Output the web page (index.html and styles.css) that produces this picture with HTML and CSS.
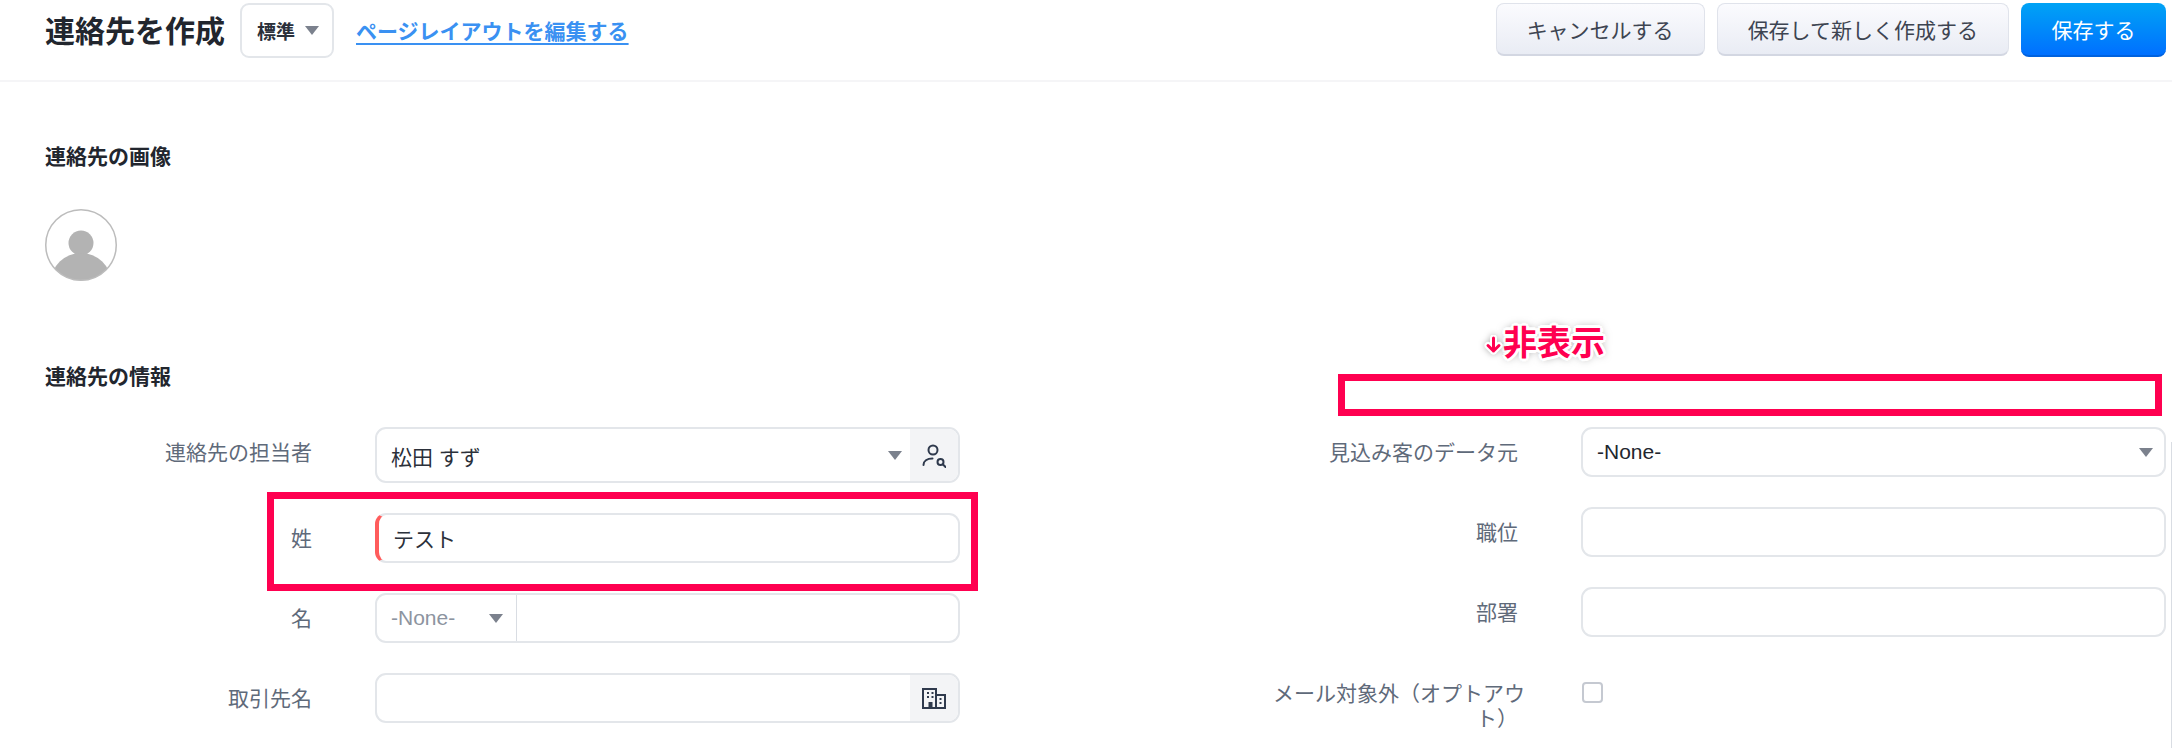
FILE: index.html
```html
<!DOCTYPE html>
<html lang="ja">
  <head>
    <meta charset="UTF-8" />
    <meta name="viewport" content="width=device-width, initial-scale=1.0" />
    <title>連絡先を作成</title>
    <link rel="stylesheet" href="styles.css">
  </head>
  <body>
    <header class="topbar">
      <h1>連絡先を作成</h1>
      <div class="layout-select">標準<span class="caret"></span></div>
      <a class="layout-link" href="#">ページレイアウトを編集する</a>
      <div class="actions">
        <button class="btn">キャンセルする</button>
        <button class="btn">保存して新しく作成する</button>
        <button class="btn btn-primary">保存する</button>
      </div>
    </header>

    <main class="content">
      <h2>連絡先の画像</h2>
      <svg class="avatar" viewBox="0 0 72 72" aria-hidden="true">
        <defs>
          <clipPath id="avatar-clip"><circle cx="36" cy="36" r="35.5" /></clipPath>
        </defs>
        <g clip-path="url(#avatar-clip)" fill="#b3b3b3">
          <circle cx="36" cy="34" r="12.5" />
          <ellipse cx="36" cy="73" rx="30" ry="29" />
        </g>
        <circle cx="36" cy="36" r="35.25" fill="none" stroke="#bcbcbc" stroke-width="1.5" />
      </svg>

      <h2 class="section-title">連絡先の情報</h2>

      <div class="form-grid">
        <div class="form-col">
          <div class="row">
            <label>連絡先の担当者</label>
            <div class="field field-tall">
              <span class="value">松田 すず</span>
              <span class="caret"></span>
              <span class="addon">
                <svg class="icon-owner" width="24" height="24" viewBox="0 0 24 24" fill="none" stroke="#2f3a4d" stroke-width="2" stroke-linecap="round">
                  <circle cx="11" cy="6" r="4.500" />
                  <path d="M1.500 21c0-4 3.500-6.500 9-6.500" />
                  <circle cx="18.500" cy="18" r="3" />
                  <path d="M21 20.500l2.500 2.500" />
                </svg>
              </span>
            </div>
          </div>
          <div class="row">
            <label>姓</label>
            <div class="field field-required"><span class="value">テスト</span></div>
          </div>
          <div class="row">
            <label>名</label>
            <div class="field">
              <div class="salutation">-None-<span class="caret"></span></div>
            </div>
          </div>
          <div class="row">
            <label>取引先名</label>
            <div class="field">
              <span class="value"></span>
              <span class="addon">
                <svg width="26" height="24" viewBox="0 0 26 24" fill="none" stroke="#2f3a4d" stroke-width="2">
                  <path d="M2 22V3h13v19z" />
                  <path d="M15 9h9v13h-9" />
                  <path d="M1 22h24" />
                  <path d="M6 7h2M10.500 7h2M6 11h2M10.500 11h2" />
                  <path d="M8.500 22v-5h2v5" />
                  <path d="M18.500 13h2M18.500 17h2" />
                </svg>
              </span>
            </div>
          </div>
        </div>

        <div class="form-col">
          <div class="row">
            <label>見込み客のデータ元</label>
            <div class="field field-select">
              <span class="value value-none">-None-</span>
              <span class="caret"></span>
            </div>
          </div>
          <div class="row">
            <label>職位</label>
            <div class="field"></div>
          </div>
          <div class="row">
            <label>部署</label>
            <div class="field"></div>
          </div>
          <div class="row">
            <label class="label-wrap"><span class="overhang">メール対象外（オプトアウ</span><br />ト）</label>
            <div class="check-wrap"><span class="checkbox"></span></div>
          </div>
        </div>
      </div>
    </main>

    <!-- markup drawn on top of the screenshot -->
    <div class="mark mark-name"></div>
    <div class="mark mark-hidden"></div>
    <div class="mark-note">
      <svg class="arrow" width="19" height="20" viewBox="0 0 19 20" fill="none" stroke-linecap="round" stroke-linejoin="round">
        <path d="M9.500 3v13M4 10.500l5.500 5.500 5.500-5.500" stroke="#fff" stroke-width="7" />
        <path d="M9.500 3v13M4 10.500l5.500 5.500 5.500-5.500" stroke="#ff0050" stroke-width="3" />
      </svg>
      <span>非表示</span>
    </div>
    <div class="scroll-edge"></div>
  </body>
</html>
```

FILE: styles.css
```css
* {
  box-sizing: border-box;
}
html,
body {
  height: 100%;
}
body {
  margin: 0;
  position: relative;
  overflow: hidden;
  background-color: #fff;
  color: #2b303a;
  font-family: "Liberation Sans", "Noto Sans CJK JP", sans-serif;
  font-size: 21px;
}
.topbar {
  display: flex;
  align-items: flex-start;
  height: 82px;
  padding: 3px 6px 0 45px;
  border-bottom: 2px solid #f5f5f7;
}
h1 {
  margin: 0 15px 0 0;
  color: #22262e;
  font-size: 30px;
  font-weight: 700;
  line-height: 58px;
}
.layout-select {
  display: flex;
  align-items: center;
  width: 94px;
  height: 55px;
  padding-left: 15px;
  border: 2px solid #e3e6ea;
  border-radius: 9px;
  font-size: 19px;
  font-weight: 700;
}
.layout-select .caret {
  margin-left: 10px;
}
.layout-link {
  margin-left: 22px;
  color: #3a91f2;
  font-size: 21px;
  font-weight: 700;
  line-height: 58px;
  text-decoration-thickness: 2px;
  text-underline-offset: 4px;
}
.actions {
  display: flex;
  gap: 12px;
  margin-left: auto;
}
.btn {
  height: 53px;
  padding: 0 30px;
  border: 1px solid #e0e3eb;
  border-bottom: 2px solid #d3d7e2;
  border-radius: 8px;
  background: linear-gradient(#fbfbfe, #e9ecf4);
  color: #3d4451;
  font-family: inherit;
  font-size: 21px;
}
.btn-primary {
  height: 54px;
  width: 145px;
  padding: 0;
  border: none;
  border-bottom: 2px solid #0062de;
  background: linear-gradient(#00a3f5, #0070ff);
  color: #fff;
}
.caret {
  display: inline-block;
  flex: none;
  width: 0;
  height: 0;
  border-left: 7px solid transparent;
  border-right: 7px solid transparent;
  border-top: 9px solid #7b818d;
}
.content {
  padding: 60px 6px 0 45px;
}
h2 {
  margin: 0;
  color: #22262e;
  font-size: 21px;
  font-weight: 700;
  line-height: 30px;
}
.section-title {
  margin-top: 81px;
}
.avatar {
  display: block;
  width: 72px;
  height: 72px;
  margin-top: 37px;
}
.form-grid {
  display: grid;
  grid-template-columns: 915px 915px;
  justify-content: space-between;
  margin-top: 35px;
}
.form-col {
  display: flex;
  flex-direction: column;
  gap: 30px;
}
.row {
  display: flex;
  align-items: flex-start;
  gap: 63px;
}
.row label {
  flex: none;
  width: 267px;
  height: 50px;
  color: #5f6a7a;
  line-height: 52px;
  text-align: right;
}
.row .label-wrap {
  height: auto;
  padding-top: 14px;
  line-height: 25px;
}
.overhang {
  margin-right: -7px;
}
.field {
  display: flex;
  align-items: center;
  flex: 1;
  height: 50px;
  overflow: hidden;
  border: 2px solid #e3e6ea;
  border-radius: 11px;
}
.field > .caret {
  margin-right: 8px;
}
.field-select > .caret {
  margin-right: 11px;
}
.field-tall {
  height: 56px;
}
.field-tall .value {
  padding-top: 1px;
}
.field-required {
  border-left: 4px solid #ff5c5c;
}
.field-required .value {
  padding-left: 14px;
}
.value {
  flex: 1;
  padding-left: 14px;
}
.value-none {
  color: #22262e;
}
.addon {
  display: flex;
  align-items: center;
  justify-content: center;
  flex: none;
  align-self: stretch;
  width: 48px;
  background-color: #f3f4f6;
}
.icon-owner {
  margin-top: 2px;
}
.salutation {
  display: flex;
  align-items: center;
  justify-content: space-between;
  width: 140px;
  height: 100%;
  padding: 0 13px 0 14px;
  border-right: 1px solid #d9dde3;
  color: #8d94a0;
}
.check-wrap {
  padding-top: 15px;
}
.checkbox {
  display: block;
  width: 21px;
  height: 21px;
  margin-left: 1px;
  border: 2px solid #c5c9d1;
  border-radius: 4px;
}
.mark {
  position: absolute;
  border: 7px solid #ff0050;
}
.mark-name {
  left: 267px;
  top: 492px;
  width: 711px;
  height: 99px;
}
.mark-hidden {
  left: 1338px;
  top: 374px;
  width: 824px;
  height: 42px;
}
.mark-note {
  display: flex;
  align-items: center;
  position: absolute;
  left: 1484px;
  top: 318px;
  color: #ff0050;
  font-family: "Noto Sans CJK JP", sans-serif;
  font-size: 34px;
  font-weight: 700;
  line-height: 46px;
  text-shadow: -2px -2px 0 #fff, 2px -2px 0 #fff, -2px 2px 0 #fff, 2px 2px 0 #fff, -3px 0 0 #fff, 3px 0 0 #fff, 0 -3px 0 #fff, 0 3px 0 #fff, 0 0 9px rgba(0, 0, 0, 0.55);
}
.arrow {
  flex: none;
  margin-top: 7px;
  filter: drop-shadow(0 0 3px rgba(0, 0, 0, 0.3));
}
.scroll-edge {
  position: absolute;
  right: 0;
  top: 442px;
  bottom: 0;
  width: 1px;
  background-color: #d9dde3;
}
```
